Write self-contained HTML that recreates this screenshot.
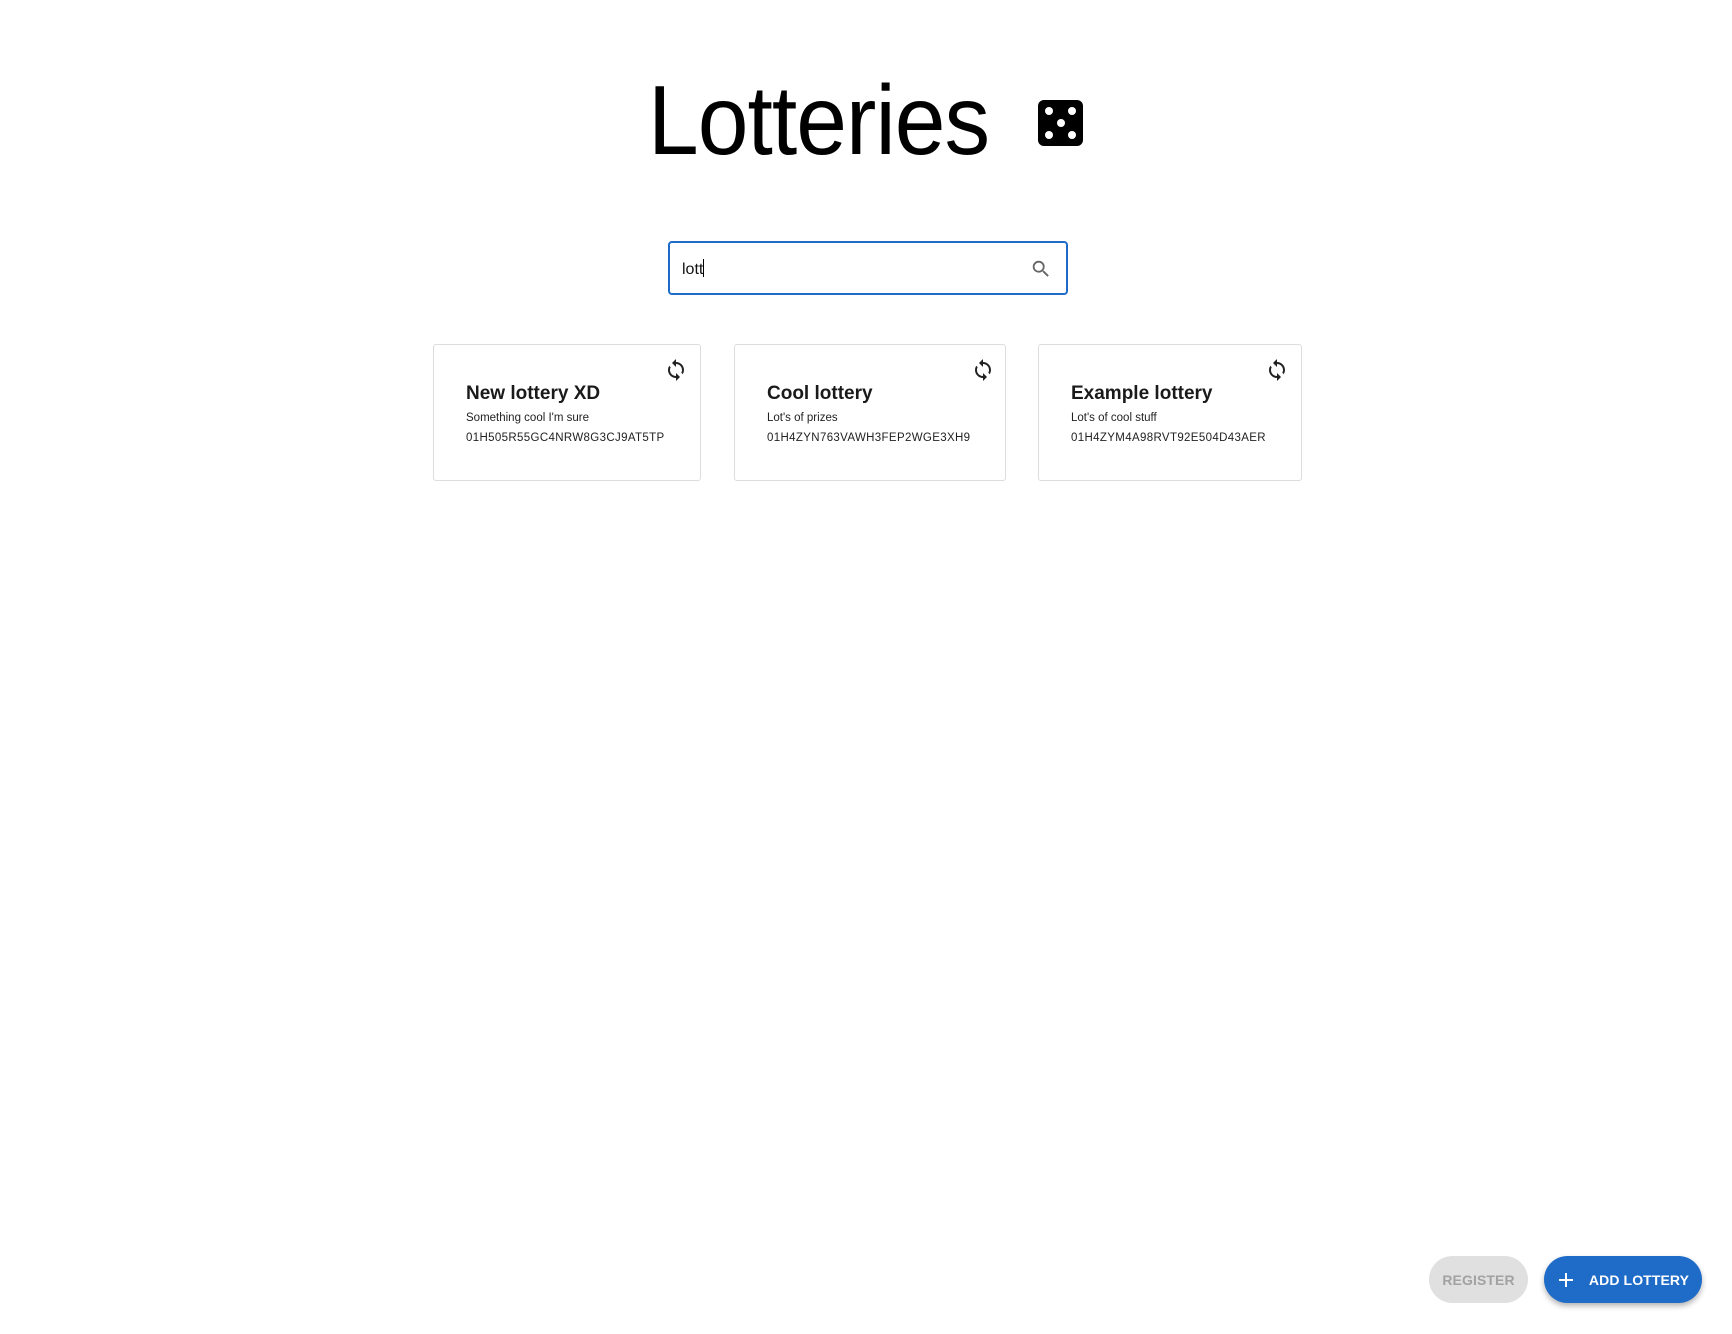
<!DOCTYPE html>
<html><head><meta charset="utf-8"><style>
*{box-sizing:border-box;margin:0;padding:0}
body{width:1732px;height:1334px;background:#fff;font-family:"Liberation Sans",sans-serif;position:relative;overflow:hidden;color:#111}
.title{position:absolute;left:648px;top:65px;font-size:98px;font-weight:300;letter-spacing:-1px;line-height:110px;color:#000;transform:scaleX(0.93);transform-origin:left}
.dice{position:absolute;left:1038px;top:100px;width:45px;height:46px;background:#000;border-radius:6px}
.dice i{position:absolute;width:8px;height:8px;background:#fff;border-radius:50%}
.search{position:absolute;left:668px;top:241px;width:400px;height:54px;border:2px solid #1f6bc8;border-radius:4px}
.search span{position:absolute;left:12px;top:16px;font-size:16px;color:#111}
.search span:after{content:"";display:inline-block;width:1px;height:18px;background:#000;vertical-align:-3px}
.search svg{position:absolute;right:14px;top:15px}
.card{position:absolute;top:344px;height:137px;border:1px solid #ddd;border-radius:3px;background:#fff}
.card h3{position:absolute;left:32px;top:38px;font-size:19px;font-weight:bold;color:#1a1a1a;white-space:nowrap}
.card .d{position:absolute;left:32px;top:67px;font-size:11.5px;color:#222;white-space:nowrap}
.card .id{position:absolute;left:32px;top:87px;font-size:11.5px;color:#222;letter-spacing:0.35px;white-space:nowrap}
.card svg{position:absolute;top:13px}
.btn{position:absolute;top:1256px;height:47px;border-radius:24px;font-size:14px;font-weight:bold;display:flex;align-items:center;justify-content:center;letter-spacing:0.1px}
.reg{left:1429px;width:99px;background:#e0e0e0;color:#a2a2a2}
.add{left:1544px;width:158px;background:#1f6bc8;color:#fff;box-shadow:0 3px 6px rgba(0,0,0,.3)}
</style></head><body>
<div class="title">Lotteries</div>
<div class="dice"><i style="left:7px;top:7px"></i><i style="left:30px;top:7px"></i><i style="left:18.5px;top:19px"></i><i style="left:7px;top:31px"></i><i style="left:30px;top:31px"></i></div>
<div class="search"><span>lott</span>
<svg width="22" height="22" viewBox="0 0 24 24"><path fill="#666" d="M15.5 14h-.79l-.28-.27A6.470 6.470 0 0 0 16 9.5 6.5 6.5 0 1 0 9.5 16c1.61 0 3.09-.59 4.230-1.57l.27.28v.79l5 4.99L20.49 19l-4.99-5zm-6 0C7.01 14 5 11.99 5 9.5S7.01 5 9.5 5 14 7.01 14 9.5 11.99 14 9.5 14z"/></svg></div>

<div class="card" style="left:433px;width:268px"><svg style="left:230px" width="24" height="24" viewBox="0 0 24 24"><path fill="#222" d="M12 4V1L8 5l4 4V6c3.31 0 6 2.69 6 6 0 1.01-.25 1.97-.7 2.8l1.46 1.46A7.93 7.93 0 0 0 20 12c0-4.42-3.58-8-8-8zm0 14c-3.31 0-6-2.69-6-6 0-1.01.25-1.970.7-2.8L5.24 7.74A7.93 7.93 0 0 0 4 12c0 4.42 3.58 8 8 8v3l4-4-4-4v3z"/></svg>
<h3>New lottery XD</h3><div class="d">Something cool I'm sure</div><div class="id">01H505R55GC4NRW8G3CJ9AT5TP</div></div>

<div class="card" style="left:734px;width:272px"><svg style="left:236px" width="24" height="24" viewBox="0 0 24 24"><path fill="#222" d="M12 4V1L8 5l4 4V6c3.31 0 6 2.69 6 6 0 1.01-.25 1.97-.7 2.8l1.46 1.46A7.93 7.93 0 0 0 20 12c0-4.42-3.58-8-8-8zm0 14c-3.31 0-6-2.69-6-6 0-1.01.25-1.970.7-2.8L5.24 7.74A7.93 7.93 0 0 0 4 12c0 4.42 3.58 8 8 8v3l4-4-4-4v3z"/></svg>
<h3>Cool lottery</h3><div class="d">Lot's of prizes</div><div class="id">01H4ZYN763VAWH3FEP2WGE3XH9</div></div>

<div class="card" style="left:1038px;width:264px"><svg style="left:226px" width="24" height="24" viewBox="0 0 24 24"><path fill="#222" d="M12 4V1L8 5l4 4V6c3.31 0 6 2.69 6 6 0 1.01-.25 1.97-.7 2.8l1.46 1.46A7.93 7.93 0 0 0 20 12c0-4.42-3.58-8-8-8zm0 14c-3.31 0-6-2.69-6-6 0-1.01.25-1.970.7-2.8L5.24 7.74A7.93 7.93 0 0 0 4 12c0 4.42 3.58 8 8 8v3l4-4-4-4v3z"/></svg>
<h3>Example lottery</h3><div class="d">Lot's of cool stuff</div><div class="id">01H4ZYM4A98RVT92E504D43AER</div></div>

<div class="btn reg">REGISTER</div>
<div class="btn add"><svg width="18" height="18" viewBox="0 0 18 18" style="margin-right:14px"><path d="M9 2v14M2 9h14" stroke="#fff" stroke-width="2"/></svg>ADD LOTTERY</div>
</body></html>
